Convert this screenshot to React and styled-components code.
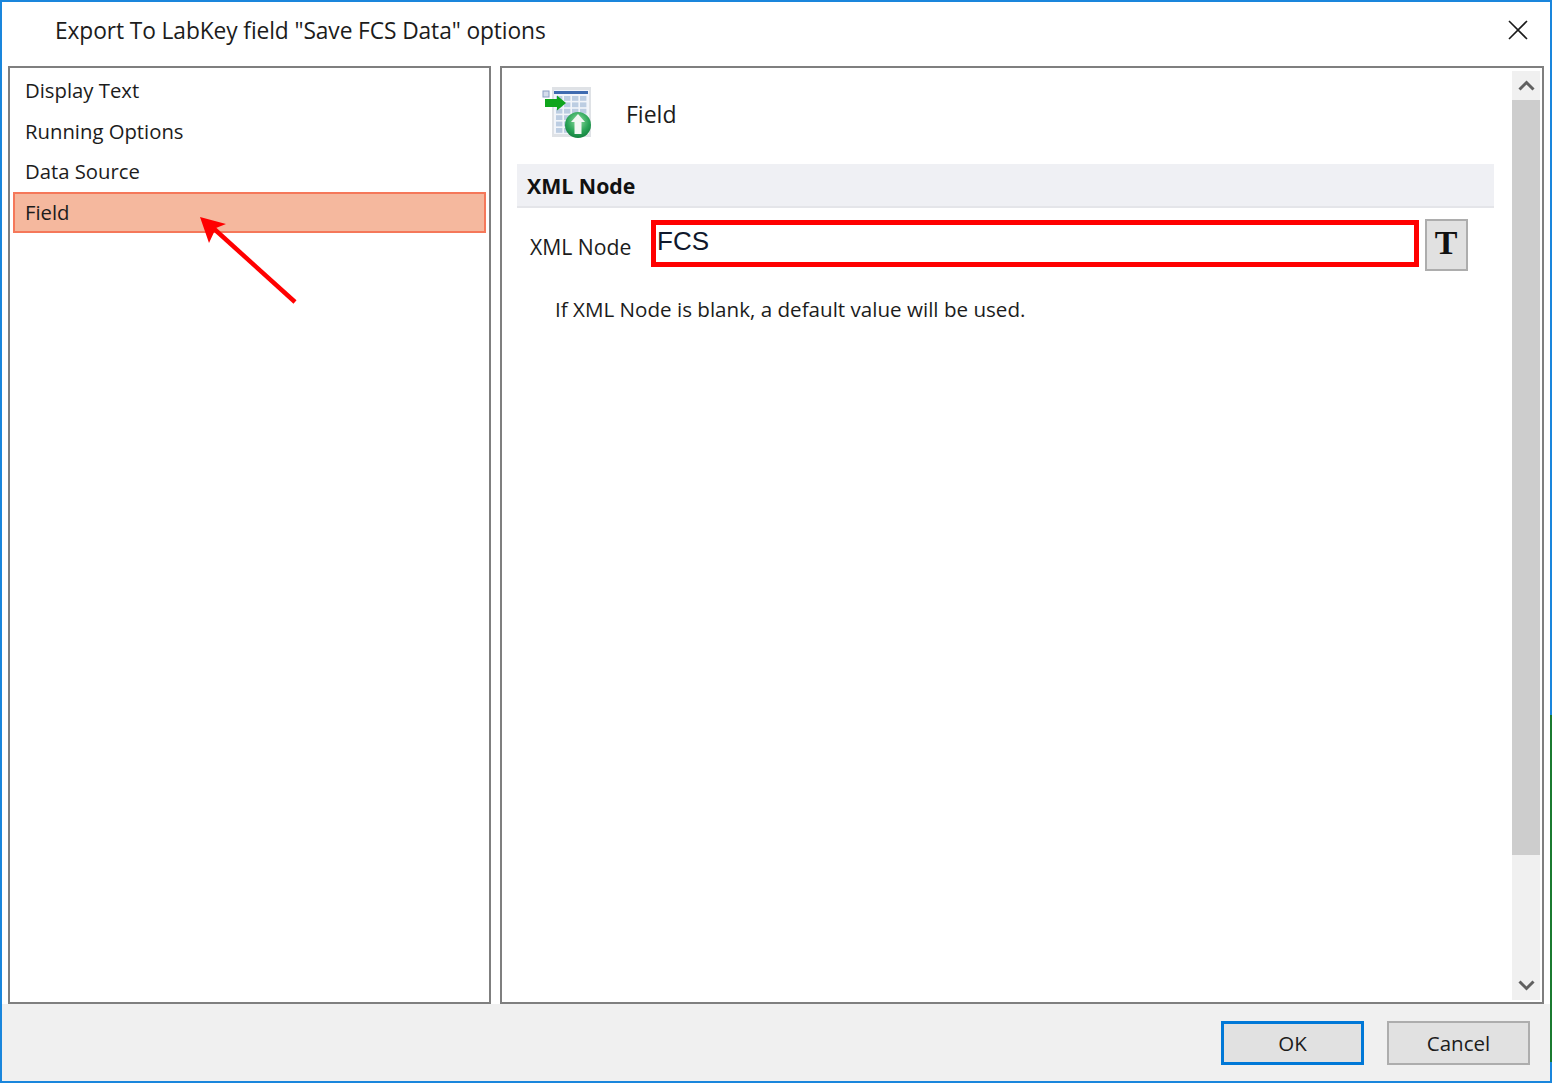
import React from 'react';
import styled, { createGlobalStyle } from 'styled-components';

const Global = createGlobalStyle`
  html, body { margin: 0; padding: 0; background: #fff; }
  body { font-family: "Open Sans", "Noto Sans", "Liberation Sans", sans-serif; color: #1c1c1c; }
  * { box-sizing: border-box; }
`;

const Window = styled.div`
  position: relative;
  width: 1552px;
  height: 1083px;
  display: flex;
  flex-direction: column;
  border: 2px solid #1a86dc;
  background: #fff;
`;

// stray green window edge behind the dialog
const EdgeStripe = styled.div`
  position: absolute;
  right: -2px;
  top: 713px;
  width: 2px;
  height: 347px;
  background: #1b7a30;
`;

const TitleBar = styled.div`
  height: 64px;
  flex: none;
  display: flex;
  align-items: center;
  justify-content: space-between;
  padding: 0 22px 8px 53px;
  font-size: 22.75px;
  letter-spacing: -0.1px;
`;

const Body = styled.div`
  flex: 1;
  min-height: 0;
  display: flex;
  gap: 9px;
  padding: 0 6px 0 6px;
`;

const Panel = styled.div`
  position: relative;
  border: 2px solid #7f7f7f;
  background: #fff;
`;

const ListPanel = styled(Panel)`
  width: 483px;
  flex: none;
  padding: 2px 3px;
`;

const ListItem = styled.div`
  height: ${p => (p.$active ? '41px' : '40.6px')};
  display: flex;
  align-items: center;
  padding-left: ${p => (p.$active ? '10px' : '12px')};
  font-size: 20.3px;
  ${p => p.$active && `
    background: #f5b89e;
    border: 2px solid #f5785a;
  `}
`;

const Arrow = styled.svg`
  position: absolute;
  left: 172px;
  top: 140px;
  width: 120px;
  height: 100px;
`;

const DetailPanel = styled(Panel)`
  flex: 1;
  display: flex;
  min-width: 0;
`;

const Content = styled.div`
  width: 1008px;
  flex: none;
  padding: 0 0 0 15px;
`;

const Heading = styled.div`
  height: 96px;
  display: flex;
  align-items: center;
  gap: 34px;
  padding: 0 0 4px 25px;
  font-size: 23px;
`;

const IconSvg = styled.svg`
  flex: none;
  margin-bottom: 4px;
`;

const Section = styled.div`
  width: 977px;
  height: 44px;
  display: flex;
  align-items: center;
  padding-left: 10px;
  background: #eff0f4;
  border-bottom: 2px solid #e4e5e9;
  font-size: 21.3px;
  font-weight: 700;
  color: #111;
`;

const FieldRow = styled.div`
  display: flex;
  align-items: flex-start;
  margin-top: 11px;
  padding-left: 13px;
`;

const FieldLabel = styled.div`
  width: 121px;
  flex: none;
  height: 56px;
  display: flex;
  align-items: center;
  padding-bottom: 2px;
  font-size: 21.2px;
`;

const ValueBox = styled.div`
  width: 768px;
  height: 47px;
  margin-top: 1px;
  flex: none;
  border: 5px solid #f00;
  padding: 0 0 0 1px;
  font-family: "Liberation Sans", Arial, sans-serif;
  font-size: 26px;
  line-height: 32px;
  color: #10182c;
`;

const TextButton = styled.div`
  width: 43px;
  height: 52px;
  flex: none;
  margin-left: 6px;
  display: flex;
  align-items: center;
  justify-content: center;
  padding: 0 1px 4px 0;
  background: #e1e1e1;
  border: 2px solid #adadad;
  font-family: "Liberation Serif", "Times New Roman", serif;
  font-size: 34px;
  font-weight: 700;
  color: #111;
`;

const Hint = styled.div`
  margin: 20px 0 0 38px;
  font-size: 20.6px;
`;

const ScrollBar = styled.div`
  width: 28px;
  margin: 3px 2px 2px auto;
  flex: none;
  display: flex;
  flex-direction: column;
  background: #f0f0f0;
`;

const ScrollButton = styled.div`
  height: ${p => (p.$up ? '29px' : '30px')};
  flex: none;
  display: flex;
  align-items: center;
  justify-content: center;
`;

const ScrollThumb = styled.div`
  height: 755px;
  flex: none;
  background: #cdcdcd;
`;

const ScrollRest = styled.div`
  flex: 1;
`;

const Footer = styled.div`
  height: 77px;
  flex: none;
  display: flex;
  justify-content: flex-end;
  align-items: flex-start;
  gap: 23px;
  padding: 17px 20px 0 0;
  background: #f0f0f0;
`;

const DialogButton = styled.div`
  width: 143px;
  height: 44px;
  display: flex;
  align-items: center;
  justify-content: center;
  background: #e1e1e1;
  border: ${p => (p.$primary ? '3px solid #0078d7' : '2px solid #adadad')};
  font-size: 20.5px;
`;

const TableIcon = () => (
  <IconSvg width="50" height="52" viewBox="0 0 50 52">
    <defs>
      <radialGradient id="ball" cx="0.5" cy="0.35" r="0.7">
        <stop offset="0" stopColor="#8fdca0" />
        <stop offset="0.6" stopColor="#2aa457" />
        <stop offset="1" stopColor="#0f7a3a" />
      </radialGradient>
    </defs>
    <rect x="10" y="1" width="39" height="50" fill="#dfe2e6" />
    <rect x="12" y="4" width="35" height="44" fill="#f2f5fa" />
    <rect x="12" y="5" width="34" height="3" fill="#3f6bb0" />
    {[0, 1, 2, 3, 4, 5].map(r =>
      [0, 1, 2, 3].map(c => (
        <rect key={`${r}-${c}`} x={14 + c * 8} y={10 + r * 6.4} width="6.4" height="4.8" fill="#bccde2" />
      ))
    )}
    <rect x="1" y="5" width="6" height="6" fill="#d5ddec" stroke="#8ba0c4" />
    <path d="M3 13h12V9.5L24 17 15 24.5V21H3z" fill="#0fa51c" />
    <circle cx="36" cy="39" r="13" fill="url(#ball)" />
    <path d="M36 28l7 8h-3.5v12h-7V36H29z" fill="#f2f7f4" />
  </IconSvg>
);

const Chevron = ({ up }) => (
  <svg width="17" height="11" viewBox="0 0 17 11">
    <path d={up ? 'M1.5 9.5 8.5 2.5l7 7' : 'M1.5 1.5l7 7 7-7'} fill="none" stroke="#606060" strokeWidth="3" />
  </svg>
);

const CloseIcon = () => (
  <svg width="20" height="20" viewBox="0 0 20 20">
    <path d="M1 1l18 18M19 1L1 19" stroke="#1a1a1a" strokeWidth="1.6" fill="none" />
  </svg>
);

const items = ['Display Text', 'Running Options', 'Data Source', 'Field'];

export default function App() {
  return (
    <Window>
      <Global />
      <EdgeStripe />
      <TitleBar>
        <span>Export To LabKey field "Save FCS Data" options</span>
        <CloseIcon />
      </TitleBar>
      <Body>
        <ListPanel>
          {items.map(item => (
            <ListItem key={item} $active={item === 'Field'}>{item}</ListItem>
          ))}
          <Arrow viewBox="0 0 120 100">
            <path d="M113 94 30 19" stroke="#f00" strokeWidth="4.5" fill="none" />
            <path d="M18 9 44 16 34 20 27 35z" fill="#f00" />
          </Arrow>
        </ListPanel>
        <DetailPanel>
          <Content>
            <Heading>
              <TableIcon />
              <span>Field</span>
            </Heading>
            <Section>XML Node</Section>
            <FieldRow>
              <FieldLabel>XML Node</FieldLabel>
              <ValueBox>FCS</ValueBox>
              <TextButton>T</TextButton>
            </FieldRow>
            <Hint>If XML Node is blank, a default value will be used.</Hint>
          </Content>
          <ScrollBar>
            <ScrollButton $up><Chevron up /></ScrollButton>
            <ScrollThumb />
            <ScrollRest />
            <ScrollButton><Chevron /></ScrollButton>
          </ScrollBar>
        </DetailPanel>
      </Body>
      <Footer>
        <DialogButton $primary>OK</DialogButton>
        <DialogButton>Cancel</DialogButton>
      </Footer>
    </Window>
  );
}
